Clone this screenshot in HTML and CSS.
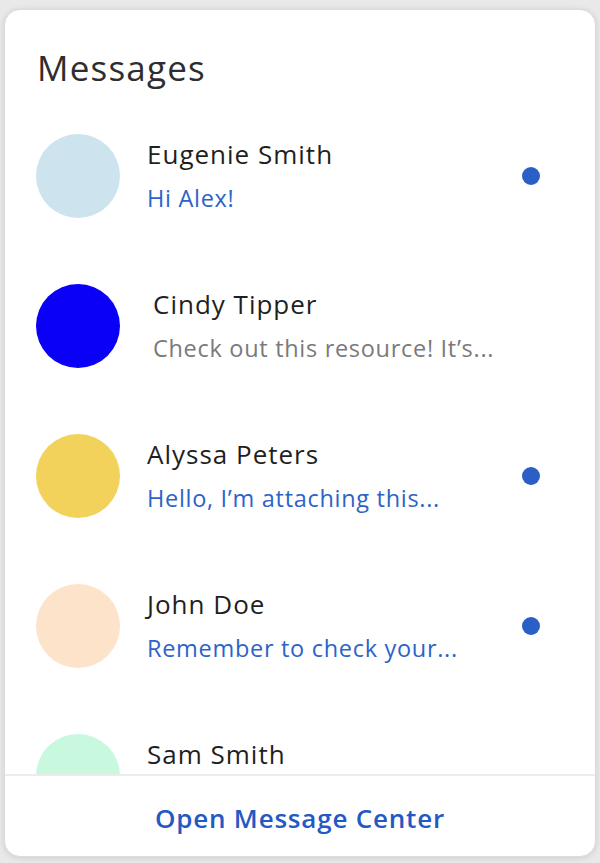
FILE: index.html
```html
<!DOCTYPE html>
<html>
<head>
<meta charset="utf-8">
<link rel="stylesheet" href="styles.css">
</head>
<body>
<div class="card">
  <h1 class="title">Messages</h1>
  <ul class="list">
    <li class="row">
      <span class="avatar av-blue-light"></span>
      <div class="text">
        <div class="name">Eugenie Smith</div>
        <div class="preview unread">Hi Alex!</div>
      </div>
      <span class="dot"></span>
    </li>
    <li class="row">
      <span class="avatar av-blue"></span>
      <div class="text shifted">
        <div class="name">Cindy Tipper</div>
        <div class="preview">Check out this resource! It’s...</div>
      </div>
    </li>
    <li class="row">
      <span class="avatar av-yellow"></span>
      <div class="text">
        <div class="name">Alyssa Peters</div>
        <div class="preview unread">Hello, I’m attaching this...</div>
      </div>
      <span class="dot"></span>
    </li>
    <li class="row">
      <span class="avatar av-peach"></span>
      <div class="text">
        <div class="name">John Doe</div>
        <div class="preview unread">Remember to check your...</div>
      </div>
      <span class="dot"></span>
    </li>
    <li class="row">
      <span class="avatar av-mint"></span>
      <div class="text">
        <div class="name">Sam Smith</div>
      </div>
    </li>
  </ul>
  <div class="footer"><a class="footer-link">Open Message Center</a></div>
</div>
</body>
</html>
```
FILE: styles.css
```css
html, body {
  margin: 0;
  padding: 0;
  height: 100%;
}
body {
  background: #e9e9e9;
  font-family: "Open Sans", "Noto Sans", sans-serif;
  padding: 9px 4px 6px 4px;
  box-sizing: border-box;
}
.card {
  height: 848px;
  background: #fff;
  border-radius: 16px;
  border: 1px solid #dcdcdc;
  box-shadow: 0 1px 6px rgba(0,0,0,0.12);
  display: flex;
  flex-direction: column;
  overflow: hidden;
  box-sizing: border-box;
}
.title {
  margin: 0;
  padding: 38px 32px 13px 32px;
  font-size: 35px;
  line-height: 40px;
  font-weight: 400;
  letter-spacing: 1.2px;
  color: #2e2e2e;
}
.list {
  list-style: none;
  margin: 0;
  padding: 0;
  flex: 1;
  overflow: hidden;
}
.row {
  height: 150px;
  display: flex;
  align-items: center;
  padding: 0 55px 0 31px;
}
.avatar {
  width: 84px;
  height: 84px;
  border-radius: 50%;
  flex: none;
}
.av-blue-light { background: #cde4ee; }
.av-blue { background: #0a00f6; }
.av-yellow { background: #f3d25b; }
.av-peach { background: #fde3c9; }
.av-mint { background: #c8f8de; }
.text {
  flex: 1;
  height: 76px;
  margin-left: 27px;
  display: flex;
  flex-direction: column;
  gap: 12px;
}
.text.shifted { margin-left: 33px; }
.name {
  font-size: 26px;
  line-height: 32px;
  letter-spacing: 1px;
  color: #1f1f1f;
}
.preview {
  font-size: 23.5px;
  line-height: 32px;
  letter-spacing: 0.7px;
  color: #7a7a7a;
}
.preview.unread { color: #2d63c8; }
.dot {
  width: 18px;
  height: 18px;
  border-radius: 50%;
  background: #2a60c6;
  flex: none;
}
.footer {
  flex: none;
  height: 82px;
  border-top: 2px solid #ececec;
  display: flex;
  align-items: center;
  justify-content: center;
  padding-top: 4px;
  box-sizing: border-box;
}
.footer-link {
  font-size: 26px;
  font-weight: 600;
  letter-spacing: 0.8px;
  color: #2458c4;
}
```
